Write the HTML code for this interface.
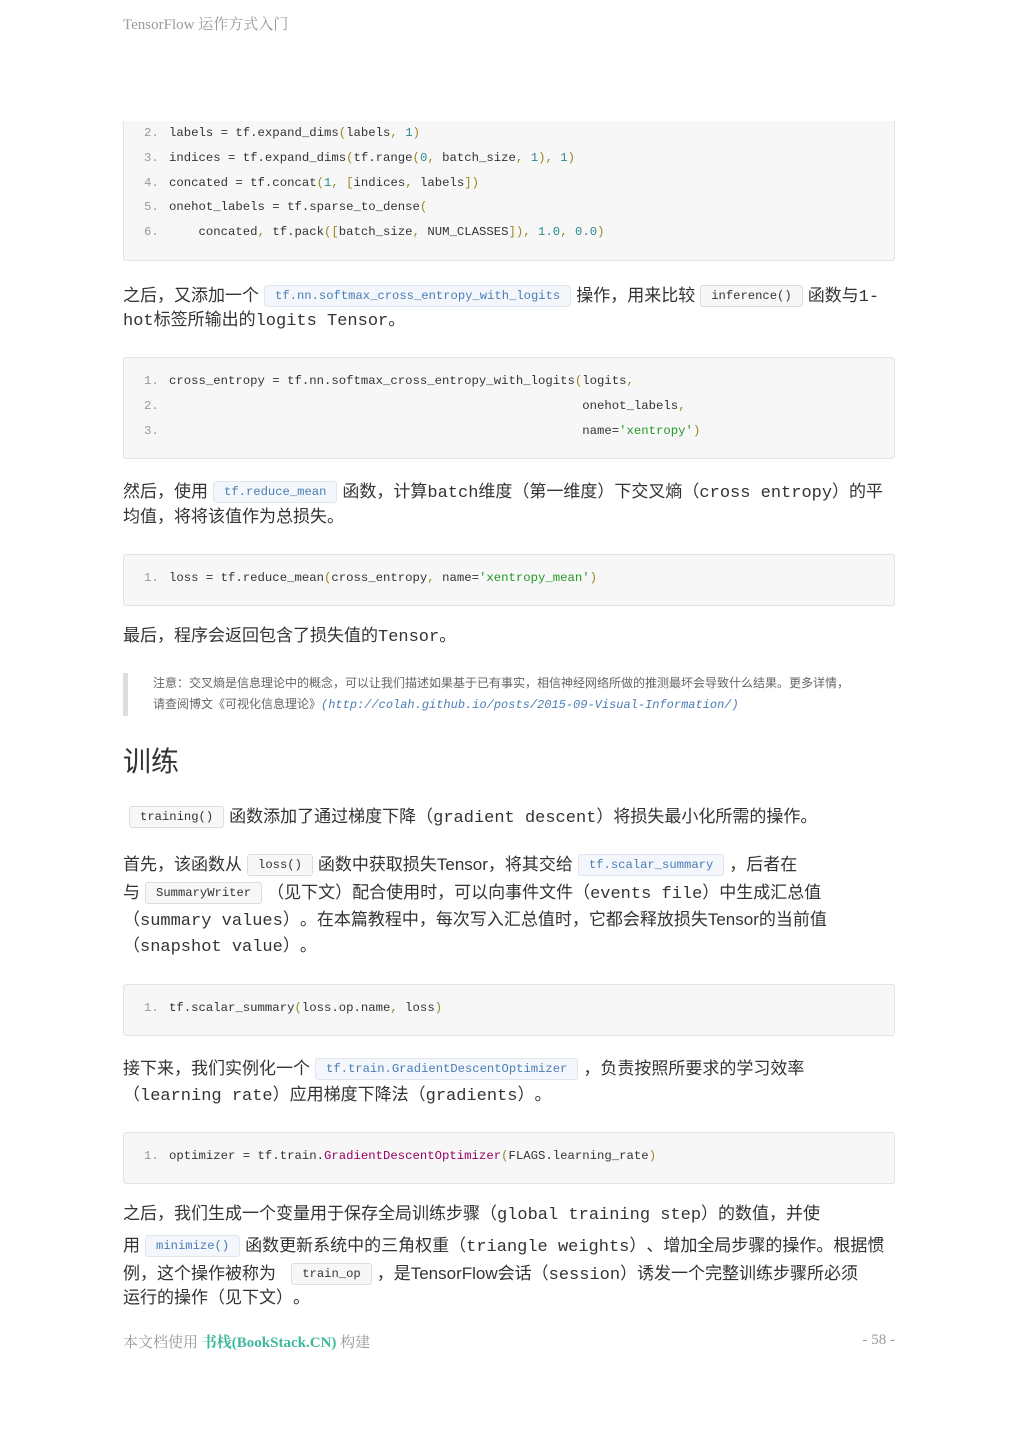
<!DOCTYPE html>
<html><head><meta charset="utf-8"><style>
body{margin:0;width:1019px;height:1440px;background:#fff;position:relative;overflow:hidden;font-family:"Liberation Mono","Noto Sans CJK SC",monospace;color:#333}
.l{position:absolute;left:123px;white-space:nowrap;font-size:17px;line-height:20px}
.s{font-family:"Liberation Sans","Noto Sans CJK SC",sans-serif}
.pre{position:absolute;left:123px;width:770px;background:#f7f7f7;border:1px solid #e3e3e3;border-radius:3px}
.c{position:absolute;left:20px;white-space:pre;font-size:12.3px;line-height:16px;color:#333}
.n{color:#999;display:inline-block;width:25px}
.p{color:#998822}.num{color:#2a8a8a}.str{color:#229922}.f{color:#990066}
.k{display:inline-block;font-size:12.2px;line-height:18px;padding:1px 10px;border:1px solid #ddd;border-radius:3px;background:#f7f7f7;color:#333;vertical-align:2px;margin:0 5px}
.b{background:#f3f6fa;color:#4a7db5;border-color:#e0e6ee}
i.q{font-style:normal;display:inline-block;width:17px;text-align:center}
</style></head><body>
<div style="position:absolute;left:123px;top:13px;font:15px 'Liberation Serif','Noto Serif CJK SC',serif;color:#999">TensorFlow 运作方式入门</div>

<div class="pre" style="top:121px;height:139px;border-top:none;border-radius:0 0 3px 3px">
<div class="c" style="top:4px"><span class="n">2.</span>labels = tf.expand_dims<span class="p">(</span>labels<span class="p">,</span> <span class="num">1</span><span class="p">)</span></div>
<div class="c" style="top:29px"><span class="n">3.</span>indices = tf.expand_dims<span class="p">(</span>tf.range<span class="p">(</span><span class="num">0</span><span class="p">,</span> batch_size<span class="p">,</span> <span class="num">1</span><span class="p">),</span> <span class="num">1</span><span class="p">)</span></div>
<div class="c" style="top:54px"><span class="n">4.</span>concated = tf.concat<span class="p">(</span><span class="num">1</span><span class="p">,</span> <span class="p">[</span>indices<span class="p">,</span> labels<span class="p">])</span></div>
<div class="c" style="top:78px"><span class="n">5.</span>onehot_labels = tf.sparse_to_dense<span class="p">(</span></div>
<div class="c" style="top:103px"><span class="n">6.</span>    concated<span class="p">,</span> tf.pack<span class="p">([</span>batch_size<span class="p">,</span> NUM_CLASSES<span class="p">]),</span> <span class="num">1.0</span><span class="p">,</span> <span class="num">0.0</span><span class="p">)</span></div>
</div>

<div class="l" style="top:285px">之后，又添加一个<span class="k b">tf.nn.softmax_cross_entropy_with_logits</span>操作，用来比较<span class="k">inference()</span>函数与1-</div>
<div class="l" style="top:312px">hot标签所输出的logits Tensor。</div>

<div class="pre" style="top:357px;height:100px">
<div class="c" style="top:15px"><span class="n">1.</span>cross_entropy = tf.nn.softmax_cross_entropy_with_logits<span class="p">(</span>logits<span class="p">,</span></div>
<div class="c" style="top:40px"><span class="n">2.</span>                                                        onehot_labels<span class="p">,</span></div>
<div class="c" style="top:65px"><span class="n">3.</span>                                                        name=<span class="str">'xentropy'</span><span class="p">)</span></div>
</div>

<div class="l" style="top:481px">然后，使用<span class="k b">tf.reduce_mean</span>函数，计算batch维度<i class="q">（</i>第一维度<i class="q">）</i>下交叉熵<i class="q">（</i>cross entropy<i class="q">）</i>的平</div>
<div class="l" style="top:509px">均值，将将该值作为总损失。</div>

<div class="pre" style="top:554px;height:50px">
<div class="c" style="top:15px"><span class="n">1.</span>loss = tf.reduce_mean<span class="p">(</span>cross_entropy<span class="p">,</span> name=<span class="str">'xentropy_mean'</span><span class="p">)</span></div>
</div>

<div class="l" style="top:628px">最后，程序会返回包含了损失值的Tensor。</div>

<div style="position:absolute;left:123px;top:673px;width:5px;height:43px;background:#ddd"></div>
<div class="l s" style="left:153px;top:673px;font-size:12px;color:#666">注意：交叉熵是信息理论中的概念，可以让我们描述如果基于已有事实，相信神经网络所做的推测最坏会导致什么结果。更多详情，</div>
<div class="l s" style="left:153px;top:694px;font-size:12px;color:#666">请查阅博文《可视化信息理论》<i style="font-family:'Liberation Mono',monospace;color:#4a7db5">(http://colah.github.io/posts/2015-09-Visual-Information/)</i></div>

<div class="l s" style="top:745px;font-size:28px;line-height:34px;color:#333">训练</div>

<div class="l" style="top:806px;left:125px"><span class="k" style="margin-left:4px">training()</span>函数添加了通过梯度下降<i class="q">（</i>gradient descent<i class="q">）</i>将损失最小化所需的操作。</div>

<div class="l" style="top:854px">首先，该函数从<span class="k">loss()</span>函数中获取损失<span class="s">Tensor</span>，将其交给<span class="k b">tf.scalar_summary</span>，后者在</div>
<div class="l" style="top:882px">与<span class="k">SummaryWriter</span><i class="q">（</i>见下文<i class="q">）</i>配合使用时，可以向事件文件<i class="q">（</i>events file<i class="q">）</i>中生成汇总值</div>
<div class="l" style="top:910px"><i class="q">（</i>summary values<i class="q">）</i>。在本篇教程中，每次写入汇总值时，它都会释放损失<span class="s">Tensor</span>的当前值</div>
<div class="l" style="top:938px"><i class="q">（</i>snapshot value<i class="q">）</i>。</div>

<div class="pre" style="top:984px;height:50px">
<div class="c" style="top:15px"><span class="n">1.</span>tf.scalar_summary<span class="p">(</span>loss.op.name<span class="p">,</span> loss<span class="p">)</span></div>
</div>

<div class="l" style="top:1058px">接下来，我们实例化一个<span class="k b">tf.train.GradientDescentOptimizer</span>，负责按照所要求的学习效率</div>
<div class="l" style="top:1087px"><i class="q">（</i>learning rate<i class="q">）</i>应用梯度下降法<i class="q">（</i>gradients<i class="q">）</i>。</div>

<div class="pre" style="top:1132px;height:50px">
<div class="c" style="top:15px"><span class="n">1.</span>optimizer = tf.train.<span class="f">GradientDescentOptimizer</span><span class="p">(</span>FLAGS.learning_rate<span class="p">)</span></div>
</div>

<div class="l" style="top:1206px">之后，我们生成一个变量用于保存全局训练步骤<i class="q">（</i>global training step<i class="q">）</i>的数值，并使</div>
<div class="l" style="top:1235px">用<span class="k b">minimize()</span>函数更新系统中的三角权重<i class="q">（</i>triangle weights<i class="q">）</i>、增加全局步骤的操作。根据惯</div>
<div class="l" style="top:1263px">例，这个操作被称为 <span class="k">train_op</span>，是<span class="s">TensorFlow</span>会话<i class="q">（</i>session<i class="q">）</i>诱发一个完整训练步骤所必须</div>
<div class="l" style="top:1290px">运行的操作<i class="q">（</i>见下文<i class="q">）</i>。</div>

<div style="position:absolute;left:123px;top:1331px;font:15px 'Liberation Serif','Noto Serif CJK SC',serif;color:#999">本文档使用 <b style="color:#3cb89a">书栈(BookStack.CN)</b> 构建</div>
<div style="position:absolute;right:124px;top:1332px;font:15px 'Liberation Serif',serif;color:#999">- 58 -</div>
</body></html>
